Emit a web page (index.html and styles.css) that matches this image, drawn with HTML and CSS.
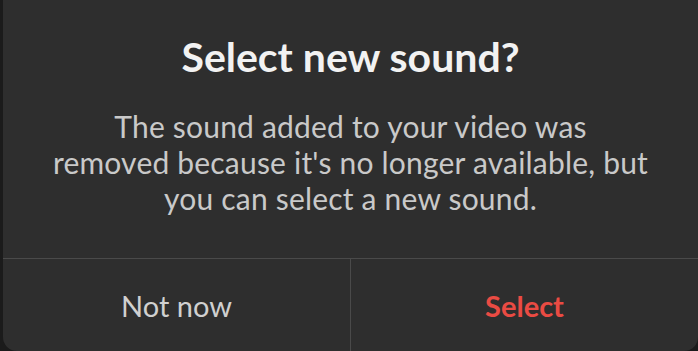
FILE: index.html
```html
<!DOCTYPE html>
<html lang="en">

<head>
    <meta charset="UTF-8">
    <meta name="viewport" content="width=device-width, initial-scale=1.0">
    <title>Select new sound?</title>
    <link rel="stylesheet" href="styles.css">
</head>

<body>
    <div class="dialog">
        <div class="content">
            <h1 class="title">Select new sound?</h1>
            <p class="message">The sound added to your video was<br>removed because it's no longer available, but<br>you can select a new sound.</p>
        </div>
        <div class="actions">
            <button class="action">Not now</button>
            <button class="action primary">Select</button>
        </div>
    </div>
</body>

</html>
```

FILE: styles.css
```css
body {
    margin: 0;
    height: 351px;
    background: #1b1b1b;
    font-family: "Lato", "Noto Sans", sans-serif;
    overflow: hidden;
}

.dialog {
    margin-left: 3px;
    height: 351px;
    background: #2e2e2e;
    border-radius: 0 0 14px 14px;
    display: flex;
    flex-direction: column;
}

.content {
    flex: 1;
    text-align: center;
    padding-top: 33px;
}

.title {
    margin: 0;
    font-size: 41px;
    font-weight: 700;
    color: #f2f2f2;
    line-height: 48px;
}

.message {
    margin: 27px 0 0;
    font-size: 30px;
    line-height: 36px;
    letter-spacing: 0.2px;
    color: #c9c9c9;
}

.actions {
    display: grid;
    grid-template-columns: 347px 1fr;
    height: 92px;
    border-top: 1px solid #4a4a4a;
}

.action {
    border: 0;
    background: transparent;
    font-family: inherit;
    font-size: 29px;
    color: #d0d0d0;
    padding: 0;
    cursor: pointer;
}

.action + .action {
    border-left: 1px solid #4a4a4a;
}

.primary {
    color: #ea4b43;
    font-weight: 700;
}
```
